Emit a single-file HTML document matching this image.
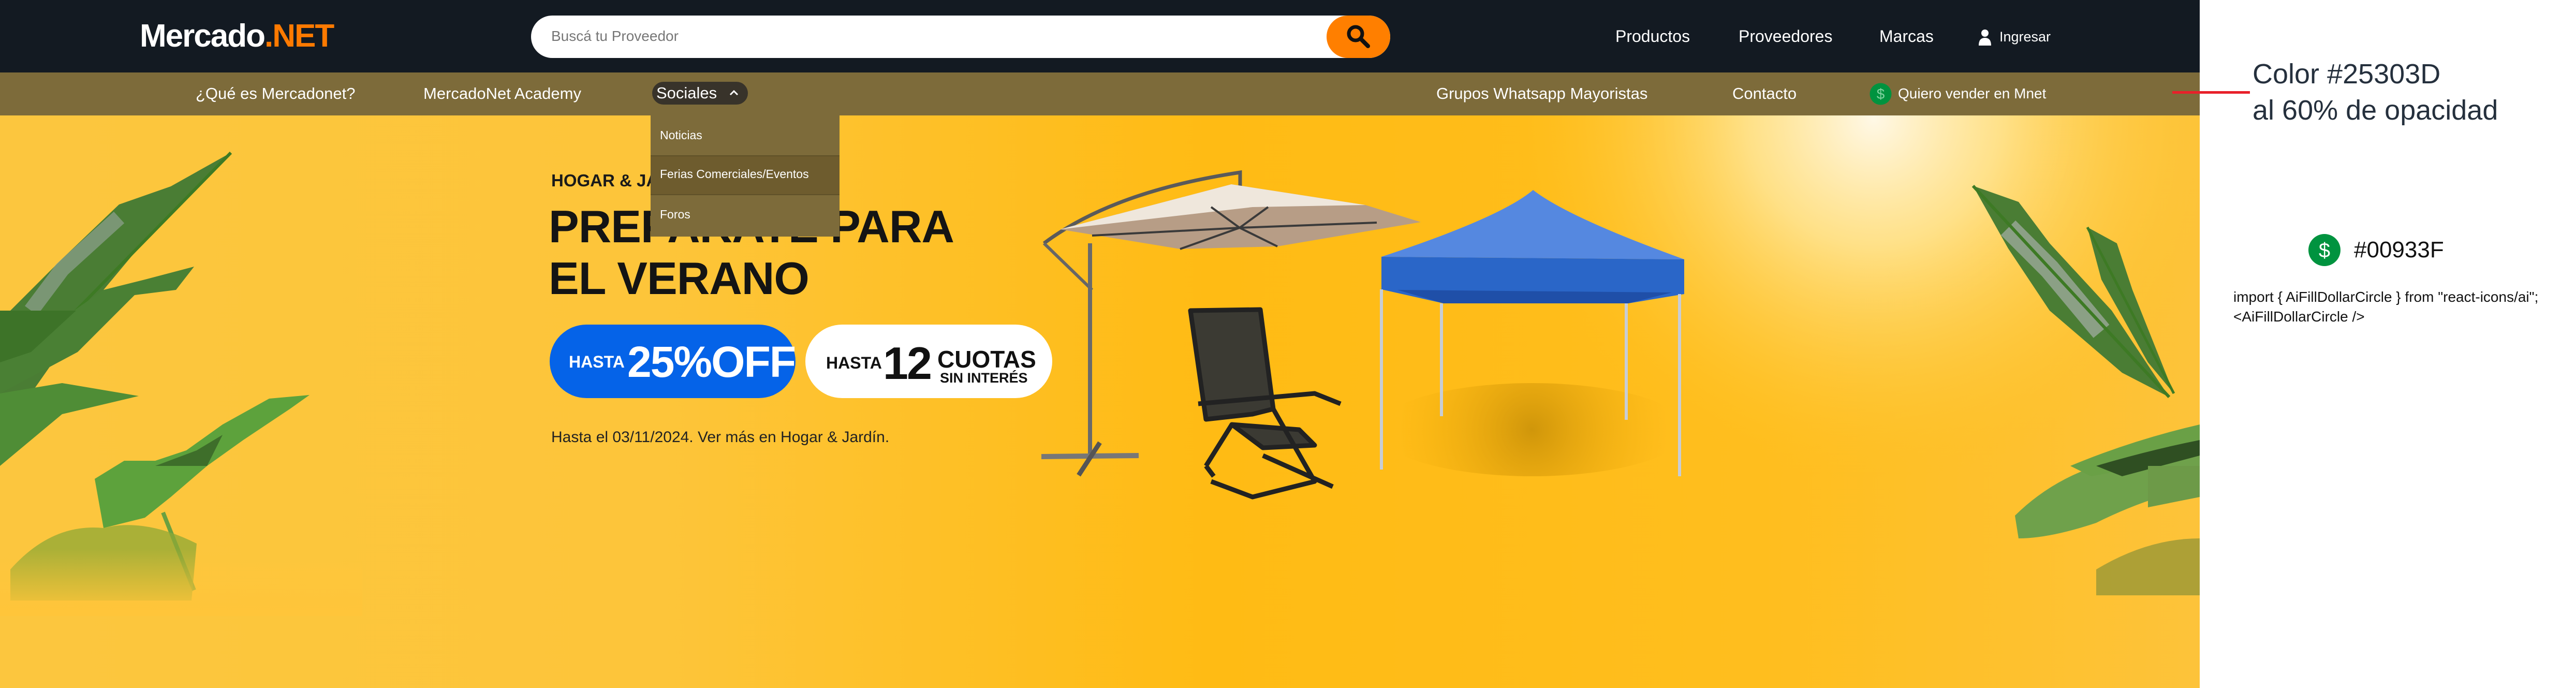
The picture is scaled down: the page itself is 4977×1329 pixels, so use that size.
<!DOCTYPE html>
<html><head><meta charset="utf-8"><style>
*{margin:0;padding:0;box-sizing:border-box}
body{width:4977px;height:1329px;position:relative;overflow:hidden;background:#fff;font-family:"Liberation Sans",sans-serif}
.abs{position:absolute}
#hero{left:0;top:0;width:4250px;height:1329px;background:linear-gradient(90deg,#fcc63e 0%,#fdc53a 30%,#ffbb14 55%,#ffbe1e 80%,#fdc33a 100%);overflow:hidden}
#top{left:0;top:0;width:4250px;height:140px;background:#131a22}
#nav{left:0;top:140px;width:4250px;height:83px;background:#7d6b3a}
.w{color:#fff;white-space:nowrap}
</style></head><body>
<div id="hero" class="abs">
<svg class="abs" style="left:0;top:0" width="4250" height="1329" viewBox="0 0 4250 1329">
<defs>
<radialGradient id="glow" cx="3620" cy="230" r="700" gradientUnits="userSpaceOnUse"><stop offset="0" stop-color="#fff8e6"/><stop offset="0.35" stop-color="#ffe9a0" stop-opacity="0.8"/><stop offset="1" stop-color="#ffc21f" stop-opacity="0"/></radialGradient>
<radialGradient id="sh" cx="2960" cy="830" r="260" gradientUnits="userSpaceOnUse"><stop offset="0" stop-color="#b07c00" stop-opacity="0.6"/><stop offset="1" stop-color="#e9a300" stop-opacity="0"/></radialGradient>
<linearGradient id="bot" x1="0" y1="0" x2="0" y2="1"><stop offset="0" stop-color="#ffc53a" stop-opacity="0"/><stop offset="1" stop-color="#ffc53a"/></linearGradient>
</defs>
<rect x="2800" y="0" width="1450" height="1329" fill="url(#glow)"/>
<ellipse cx="2960" cy="830" rx="300" ry="90" fill="url(#sh)"/>
<!-- left palm -->
<path d="M446 295 L330 360 L230 395 L120 500 L0 620 L0 800 L60 760 L200 560 L300 440Z" fill="#4a7d34"/>
<path d="M446 295 L0 750" stroke="#3d7a24" stroke-width="6"/>
<path d="M230 420 L120 520 L60 600" stroke="#9aa8a0" stroke-width="30" opacity="0.6"/>
<path d="M375 515 L280 540 L200 560 L100 630 L0 700 L0 760 L150 680 L260 570 L340 560Z" fill="#4a8034"/>
<path d="M0 760 L120 740 L268 765 L120 800 L0 900Z" fill="#4f8d36"/>
<path d="M0 600 L147 600 L60 680 L0 700Z" fill="#3d7328"/>
<!-- left monstera -->
<path d="M183 925 L240 890 L300 890 L360 870 L430 820 L520 770 L598 763 L560 790 L470 850 L400 900 L330 960 L280 1000 L200 1020Z" fill="#5da23c"/>
<path d="M300 900 L380 870 L430 840 L400 900Z" fill="#3e6e2a"/>
<line x1="315" y1="990" x2="375" y2="1140" stroke="#6aa040" stroke-width="8"/>
<path d="M20 1100 Q100 1010 200 1020 Q280 1000 380 1050 L370 1160 L20 1160Z" fill="#8fa836" opacity="0.75"/>
<rect x="0" y="1060" width="700" height="130" fill="url(#bot)"/>
<!-- right palm -->
<path d="M3812 359 L3900 390 L3960 470 L4080 600 L4191 767 L4100 720 L3960 600 L3880 480Z" fill="#4a7d34"/>
<path d="M3880 440 L3960 520 L4060 640" stroke="#a7b0a8" stroke-width="40" opacity="0.7"/>
<path d="M3812 359 L4191 767" stroke="#3d7a24" stroke-width="6"/>
<path d="M4033 439 L4090 470 L4120 560 L4200 760 L4150 700 L4060 540Z" fill="#4a7d34"/>
<path d="M4033 439 L4200 760" stroke="#3d7a24" stroke-width="5"/>
<!-- right monstera -->
<path d="M3893 996 Q3960 930 4050 900 Q4150 880 4250 860 L4250 940 Q4150 960 4050 1010 Q3960 1040 3900 1040Z" fill="#6fa14b"/>
<path d="M4000 900 Q4120 850 4250 820 L4250 880 Q4150 900 4040 920Z" fill="#6aa046"/>
<path d="M4050 900 Q4150 870 4250 850 L4250 880 L4100 920Z" fill="#2f4f22"/>
<path d="M4150 900 L4250 900 L4250 960 L4150 980Z" fill="#6d9a48"/>
<path d="M4050 1100 Q4150 1040 4250 1040 L4250 1150 L4050 1150Z" fill="#9f9a36" opacity="0.85"/>
<!-- umbrella -->
<path d="M2017 470 Q2150 370 2396 333 L2396 360" fill="none" stroke="#5a5a5a" stroke-width="7"/>
<path d="M2048 443 L2379 356 L2638 396 L2745 429 L2468 476 L2280 481Z" fill="#b79d86"/>
<path d="M2048 443 L2379 356 L2638 396 L2420 400Z" fill="#efe7dc"/>
<g stroke="#3a3a3a" stroke-width="4"><line x1="2395" y1="440" x2="2280" y2="481"/><line x1="2395" y1="440" x2="2468" y2="476"/><line x1="2395" y1="440" x2="2660" y2="430"/><line x1="2395" y1="440" x2="2110" y2="455"/><line x1="2395" y1="440" x2="2340" y2="400"/><line x1="2395" y1="440" x2="2450" y2="400"/></g>
<path d="M2017 470 L2110 560" stroke="#666" stroke-width="6"/>
<line x1="2106" y1="470" x2="2106" y2="885" stroke="#6a6a6a" stroke-width="8"/>
<line x1="2012" y1="882" x2="2200" y2="880" stroke="#777" stroke-width="10"/>
<line x1="2084" y1="918" x2="2125" y2="855" stroke="#555" stroke-width="9"/>
<!-- chair -->
<g fill="none" stroke="#222" stroke-width="9" stroke-linejoin="round">
<path d="M2300 600 L2435 598 L2460 790 L2420 800 L2330 810Z" fill="#3b3a33"/>
<path d="M2380 820 L2510 830 L2540 860 L2440 865Z" fill="#3b3a33"/>
<path d="M2315 780 L2540 760 L2590 780"/><path d="M2330 900 L2380 820"/><path d="M2440 880 L2575 940"/><path d="M2330 900 L2345 920"/><path d="M2460 790 L2540 930 L2420 960 L2340 930"/>
</g>
<!-- tent -->
<path d="M2669 496 Q2900 420 2962 367 Q3030 420 3254 501Z" fill="#5588e0"/>
<path d="M2669 496 L3254 501 L3254 568 L3146 586 L2789 586 L2669 559Z" fill="#2a66c8"/>
<path d="M2700 560 L3230 565 L3146 586 L2789 586Z" fill="#1f4fa8"/>
<g stroke="#c8cdd6" stroke-width="6"><line x1="2669" y1="559" x2="2669" y2="907"/><line x1="3245" y1="568" x2="3245" y2="920"/><line x1="2785" y1="586" x2="2785" y2="804"/><line x1="3142" y1="586" x2="3142" y2="811"/></g>
</svg>
<div class="abs" style="left:1065px;top:330px;font-size:33px;font-weight:bold;color:#1a1a1a">HOGAR &amp; JARDÍN</div>
<div class="abs" style="left:1060px;top:388px;font-size:88px;font-weight:bold;color:#141414;line-height:100px;letter-spacing:-1px">PREPARATE PARA<br>EL VERANO</div>
<div class="abs" style="left:1062px;top:627px;width:475px;height:142px;border-radius:71px;background:#0563e8;color:#fff">
<span class="abs" style="left:37px;top:54px;font-size:32px;font-weight:bold">HASTA</span>
<span class="abs" style="left:150px;top:24px;font-size:84px;font-weight:bold;letter-spacing:-2px">25%OFF</span></div>
<div class="abs" style="left:1556px;top:627px;width:477px;height:142px;border-radius:71px;background:#fff;color:#111">
<span class="abs" style="left:40px;top:56px;font-size:32px;font-weight:bold">HASTA</span>
<span class="abs" style="left:150px;top:24px;font-size:88px;font-weight:bold;letter-spacing:-3px">12</span>
<span class="abs" style="left:255px;top:40px;font-size:46px;font-weight:bold">CUOTAS</span>
<span class="abs" style="left:260px;top:88px;font-size:27px;font-weight:bold">SIN INTERÉS</span></div>
<div class="abs" style="left:1065px;top:828px;font-size:30px;color:#222">Hasta el 03/11/2024. Ver más en Hogar &amp; Jardín.</div>
</div>
<div id="top" class="abs">
<div class="abs w" style="left:270px;top:34px;font-size:62px;font-weight:bold;letter-spacing:-2px">Mercado<span style="color:#ff7a00">.NET</span></div>
<div class="abs" style="left:1026px;top:30px;width:1660px;height:82px;background:#fff;border-radius:41px"></div>
<div class="abs" style="left:1065px;top:54px;font-size:28px;color:#777">Buscá tu Proveedor</div>
<div class="abs" style="left:2563px;top:30px;width:123px;height:82px;background:#ff7f00;border-radius:41px"></div>
<svg class="abs" style="left:2597px;top:43px" width="56" height="56" viewBox="0 0 56 56"><circle cx="22" cy="22" r="13" fill="none" stroke="#111" stroke-width="7"/><line x1="32" y1="32" x2="46" y2="46" stroke="#111" stroke-width="8" stroke-linecap="round"/></svg>
<div class="abs w" style="left:3121px;top:52px;font-size:32px">Productos</div>
<div class="abs w" style="left:3359px;top:52px;font-size:32px">Proveedores</div>
<div class="abs w" style="left:3631px;top:52px;font-size:32px">Marcas</div>
<svg class="abs" style="left:3822px;top:56px" width="26" height="32" viewBox="0 0 26 32"><circle cx="13" cy="8" r="7" fill="#fff"/><path d="M1 32 Q1 17 13 17 Q25 17 25 32Z" fill="#fff"/></svg>
<div class="abs w" style="left:3863px;top:56px;font-size:27px">Ingresar</div>
</div>
<div id="nav" class="abs">
<div class="abs w" style="left:378px;top:23px;font-size:31px">¿Qué es Mercadonet?</div>
<div class="abs w" style="left:818px;top:23px;font-size:31px">MercadoNet Academy</div>
<div class="abs" style="left:1260px;top:18px;width:185px;height:44px;border-radius:22px;background:#38332a"></div>
<div class="abs w" style="left:1268px;top:22px;font-size:31px">Sociales</div>
<svg class="abs" style="left:1408px;top:32px" width="20" height="14" viewBox="0 0 20 14"><path d="M3 11 L10 4 L17 11" fill="none" stroke="#fff" stroke-width="3"/></svg>
<div class="abs w" style="left:2775px;top:23px;font-size:31px">Grupos Whatsapp Mayoristas</div>
<div class="abs w" style="left:3347px;top:23px;font-size:31px">Contacto</div>
<svg class="abs" style="left:3612px;top:20px" width="43" height="43" viewBox="0 0 43 43"><circle cx="21.5" cy="21.5" r="21" fill="#00933f"/><text x="21.5" y="31" text-anchor="middle" font-size="28" fill="#7fd3a0" font-family="Liberation Sans">$</text></svg>
<div class="abs w" style="left:3667px;top:25px;font-size:28px">Quiero vender en Mnet</div>
</div>
<div class="abs" style="left:1257px;top:223px;width:365px;height:234px;background:#7d6b3a">
<div class="abs" style="left:0;top:77px;width:365px;height:77px;background:#6e5c2e;border-top:2px solid #5f5028;border-bottom:2px solid #5f5028"></div>
<div class="abs w" style="left:18px;top:25px;font-size:23px">Noticias</div>
<div class="abs w" style="left:18px;top:100px;font-size:23px">Ferias Comerciales/Eventos</div>
<div class="abs w" style="left:18px;top:178px;font-size:23px">Foros</div>
</div>
<div class="abs" style="left:4197px;top:176px;width:150px;height:5px;background:#e8202a"></div>
<div class="abs" style="left:4352px;top:108px;font-size:54px;color:#25303d;line-height:70px">Color #25303D<br>al 60% de opacidad</div>
<svg class="abs" style="left:4460px;top:452px" width="62" height="62" viewBox="0 0 62 62"><circle cx="31" cy="31" r="31" fill="#00933f"/><text x="31" y="45" text-anchor="middle" font-size="40" fill="#fff" font-family="Liberation Sans">$</text></svg>
<div class="abs" style="left:4548px;top:458px;font-size:44px;color:#111">#00933F</div>
<div class="abs" style="left:4315px;top:555px;font-size:28px;color:#111;line-height:38px;white-space:nowrap">import { AiFillDollarCircle } from "react-icons/ai";<br>&lt;AiFillDollarCircle /&gt;</div>
</body></html>
